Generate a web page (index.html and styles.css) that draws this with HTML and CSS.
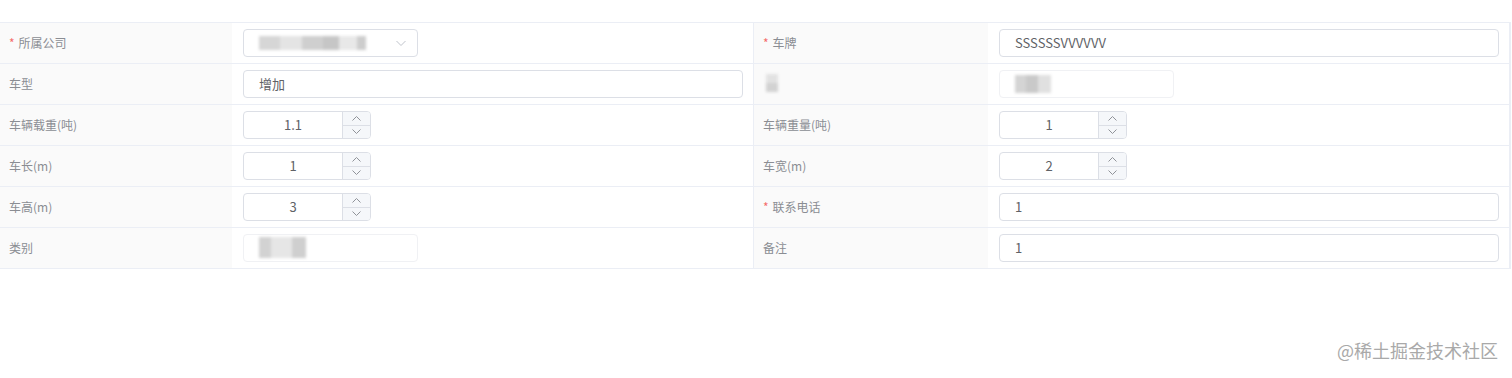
FILE: index.html
```html
<!DOCTYPE html>
<html lang="zh-CN">
<head>
    <meta charset="UTF-8">
    <title>车辆信息</title>
    <link rel="stylesheet" href="styles.css">
</head>
<body>
    <div class="page">
        <!-- 车辆详情表格 -->
        <div class="desc">
            <div class="label"><span class="req">*</span>所属公司</div>
            <div class="cell">
                <div class="select">
                    <span class="mask mask-long"></span>
                    <svg class="arrow" width="12" height="12" viewBox="0 0 12 12"><path d="M1.5 4 L6 8.5 L10.5 4" fill="none" stroke="#c0c4cc" stroke-width="1"/></svg>
                </div>
            </div>
            <div class="label"><span class="req">*</span>车牌</div>
            <div class="cell"><div class="input">SSSSSSVVVVVV</div></div>

            <div class="label">车型</div>
            <div class="cell"><div class="input">增加</div></div>
            <div class="label"><span class="mask mask-label"></span></div>
            <div class="cell"><div class="input short faded"><span class="mask mask-mid"></span></div></div>

            <div class="label">车辆载重(吨)</div>
            <div class="cell">
                <div class="number"><span class="num-val">1.1</span>
                    <span class="spin">
                        <span class="up"><svg width="9" height="5" viewBox="0 0 9 5"><path d="M0.5 4.5 L4.5 0.5 L8.5 4.5" fill="none" stroke="#909399"/></svg></span>
                        <span class="down"><svg width="9" height="5" viewBox="0 0 9 5"><path d="M0.5 0.5 L4.5 4.5 L8.5 0.5" fill="none" stroke="#909399"/></svg></span>
                    </span>
                </div>
            </div>
            <div class="label">车辆重量(吨)</div>
            <div class="cell">
                <div class="number"><span class="num-val">1</span>
                    <span class="spin">
                        <span class="up"><svg width="9" height="5" viewBox="0 0 9 5"><path d="M0.5 4.5 L4.5 0.5 L8.5 4.5" fill="none" stroke="#909399"/></svg></span>
                        <span class="down"><svg width="9" height="5" viewBox="0 0 9 5"><path d="M0.5 0.5 L4.5 4.5 L8.5 0.5" fill="none" stroke="#909399"/></svg></span>
                    </span>
                </div>
            </div>

            <div class="label">车长(m)</div>
            <div class="cell">
                <div class="number"><span class="num-val">1</span>
                    <span class="spin">
                        <span class="up"><svg width="9" height="5" viewBox="0 0 9 5"><path d="M0.5 4.5 L4.5 0.5 L8.5 4.5" fill="none" stroke="#909399"/></svg></span>
                        <span class="down"><svg width="9" height="5" viewBox="0 0 9 5"><path d="M0.5 0.5 L4.5 4.5 L8.5 0.5" fill="none" stroke="#909399"/></svg></span>
                    </span>
                </div>
            </div>
            <div class="label">车宽(m)</div>
            <div class="cell">
                <div class="number"><span class="num-val">2</span>
                    <span class="spin">
                        <span class="up"><svg width="9" height="5" viewBox="0 0 9 5"><path d="M0.5 4.5 L4.5 0.5 L8.5 4.5" fill="none" stroke="#909399"/></svg></span>
                        <span class="down"><svg width="9" height="5" viewBox="0 0 9 5"><path d="M0.5 0.5 L4.5 4.5 L8.5 0.5" fill="none" stroke="#909399"/></svg></span>
                    </span>
                </div>
            </div>

            <div class="label">车高(m)</div>
            <div class="cell">
                <div class="number"><span class="num-val">3</span>
                    <span class="spin">
                        <span class="up"><svg width="9" height="5" viewBox="0 0 9 5"><path d="M0.5 4.5 L4.5 0.5 L8.5 4.5" fill="none" stroke="#909399"/></svg></span>
                        <span class="down"><svg width="9" height="5" viewBox="0 0 9 5"><path d="M0.5 0.5 L4.5 4.5 L8.5 0.5" fill="none" stroke="#909399"/></svg></span>
                    </span>
                </div>
            </div>
            <div class="label"><span class="req">*</span>联系电话</div>
            <div class="cell"><div class="input">1</div></div>

            <div class="label">类别</div>
            <div class="cell"><div class="input short faded"><span class="mask mask-cat"></span></div></div>
            <div class="label">备注</div>
            <div class="cell"><div class="input">1</div></div>
        </div>
    </div>

    <div class="watermark">@稀土掘金技术社区</div>
</body>
</html>
```

FILE: styles.css
```css
body {
    margin: 0;
    font-family: "Noto Sans CJK SC", "Liberation Sans", sans-serif;
    font-size: 12px;
    color: #606266;
    background-color: #fff;
}
.page {
    padding-top: 22px;
    padding-right: 1px;
}
.desc {
    display: grid;
    grid-template-columns: 232px 522px 234px 1fr;
    border-top: 1px solid #ebeef5;
    border-right: 1px solid #ebeef5;
}
.label,
.cell {
    height: 41px;
    border-bottom: 1px solid #ebeef5;
    display: flex;
    align-items: center;
    box-sizing: border-box;
}
.label {
    background-color: #fafafa;
    color: #8a8d93;
    padding: 0 0 2px 9px;
}
.cell {
    padding: 0 10px 0 11px;
    background-color: #fff;
    border-right: 1px solid #ebeef5;
}
.req {
    color: #f56c6c;
    margin-right: 4px;
}
.input,
.select {
    width: 100%;
    height: 28px;
    border: 1px solid #dcdfe6;
    border-radius: 4px;
    box-sizing: border-box;
    padding: 0 15px 1px;
    display: flex;
    align-items: center;
    color: #606266;
    font-size: 13px;
    background-color: #fff;
}
.select {
    width: 175px;
    justify-content: space-between;
    padding-right: 10px;
}
.short {
    width: 175px;
}
.faded {
    border-color: #f0f1f4;
}
.number {
    width: 128px;
    height: 28px;
    border: 1px solid #dcdfe6;
    border-radius: 4px;
    box-sizing: border-box;
    display: flex;
    overflow: hidden;
}
.num-val {
    flex: 1;
    display: flex;
    align-items: center;
    justify-content: center;
    font-size: 13px;
    padding-bottom: 1px;
}
.spin {
    width: 27px;
    display: flex;
    flex-direction: column;
    border-left: 1px solid #dcdfe6;
    background-color: #f5f7fa;
}
.spin span {
    flex: 1;
    display: flex;
    align-items: center;
    justify-content: center;
}
.spin .up {
    border-bottom: 1px solid #dcdfe6;
}
/* 打码区域 */
.mask {
    display: inline-block;
    height: 14px;
    filter: blur(1.5px);
}
.mask-long {
    width: 107px;
    background: linear-gradient(90deg, #d6d6d6 0 20%, #e4e4e4 20% 40%, #cfcfcf 40% 60%, #c6c6c6 60% 75%, #e8e8e8 75% 92%, #cdcdcd 92%);
}
.mask-mid {
    width: 36px;
    height: 18px;
    background: linear-gradient(90deg, #d4d4d4 0 30%, #c9c9c9 30% 65%, #e0e0e0 65%);
}
.mask-cat {
    width: 47px;
    height: 21px;
    background: linear-gradient(90deg, #d2d2d2 0 25%, #e6e6e6 25% 70%, #cfcfcf 70%);
}
.mask-label {
    width: 12px;
    height: 18px;
    margin-left: 3px;
    background: linear-gradient(180deg, #e2e2e2 0 50%, #d2d2d2 50%);
}
.watermark {
    position: absolute;
    right: 14px;
    bottom: 15px;
    font-size: 18px;
    color: #a9a9a9;
}
```
